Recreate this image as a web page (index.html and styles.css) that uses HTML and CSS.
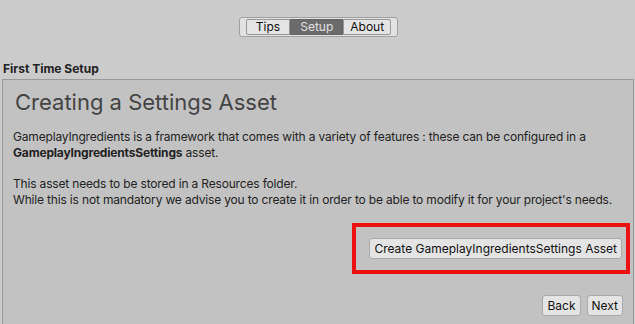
FILE: index.html
```html
<!DOCTYPE html>
<html lang="en">
<head>
    <meta charset="UTF-8">
    <title>Gameplay Ingredients - Welcome</title>
    <link rel="stylesheet" href="styles.css">
</head>
<body>
    <div class="window">
        <div class="toolbar">
            <div class="tabs">
                <button class="tab">Tips</button>
                <button class="tab active">Setup</button>
                <button class="tab">About</button>
            </div>
        </div>
        <div class="section-label">First Time Setup</div>
        <div class="panel">
            <h1>Creating a Settings Asset</h1>
            <p>GameplayIngredients is a framework that comes with a variety of features : these can be configured in a<br><b>GameplayIngredientsSettings</b> asset.</p>
            <p>This asset needs to be stored in a Resources folder.<br>While this is not mandatory we advise you to create it in order to be able to modify it for your project's needs.</p>
            <div class="create-row">
                <div class="highlight">
                    <button class="btn">Create GameplayIngredientsSettings Asset</button>
                </div>
            </div>
            <div class="nav">
                <button class="btn">Back</button>
                <button class="btn">Next</button>
            </div>
        </div>
    </div>
</body>
</html>
```

FILE: styles.css
```css
* {
    margin: 0;
    padding: 0;
    box-sizing: border-box;
}
html, body {
    height: 100%;
}
body {
    font-family: 'Inter', 'Liberation Sans', sans-serif;
    font-size: 12px;
    background: #cbcbcb;
    color: #111;
    overflow: hidden;
}
.window {
    display: flex;
    flex-direction: column;
    height: 100%;
}
.toolbar {
    display: flex;
    justify-content: center;
    padding: 17px 0 0 2px;
}
.tabs {
    display: flex;
    padding: 1px 6px;
    background: #e2e2e2;
    border: 1px solid #a0a0a0;
    border-radius: 3px;
}
.tab {
    font-family: inherit;
    font-size: 12px;
    color: #111;
    background: #e4e4e4;
    border: 1px solid #999;
    height: 16px;
    padding: 0 6px;
    line-height: 14px;
}
.tab:first-child {
    border-radius: 2px 0 0 2px;
    padding: 0 9px;
}
.tab:last-child {
    border-radius: 0 2px 2px 0;
}
.tab.active {
    background: #6b6b6b;
    color: #e0e0e0;
    border-color: #666;
    padding: 0 9px;
}
.section-label {
    font-weight: bold;
    font-size: 12px;
    color: #222;
    padding: 24px 0 3px 3px;
}
.panel {
    flex: 1;
    margin: 0 1px 0 2px;
    background: #c2c2c2;
    border: 1px solid #999;
    border-bottom: none;
    padding: 9px 10px 0 10px;
    display: flex;
    flex-direction: column;
}
h1 {
    font-weight: normal;
    font-size: 22px;
    color: #444;
    margin: 0 0 14px 2px;
}
p {
    color: #222;
    font-size: 12px;
    line-height: 16px;
    letter-spacing: -0.17px;
    margin: 0 -4px 15px 0;
    white-space: nowrap;
}
.create-row {
    display: flex;
    justify-content: flex-end;
}
.highlight {
    border: 4px solid #ee1111;
    padding: 11px 4px 11px 13px;
    margin-right: -7px;
}
.btn {
    font-family: inherit;
    font-size: 12px;
    color: #111;
    background: #e4e4e4;
    border: 1px solid #aaa;
    border-radius: 3px;
    height: 21px;
    padding: 0 4px;
}
.nav {
    display: flex;
    justify-content: flex-end;
    gap: 6px;
    margin-top: 21px;
}
```
